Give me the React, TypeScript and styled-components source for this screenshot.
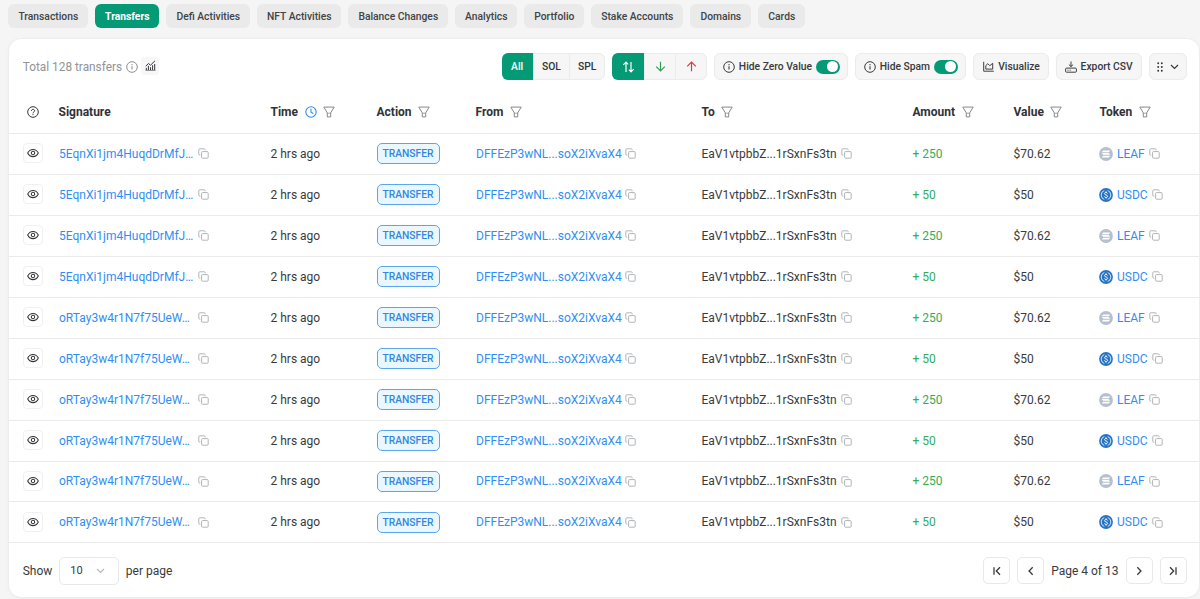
import React from "react";
import styled, { createGlobalStyle, css } from "styled-components";

const Global = createGlobalStyle`
  * { box-sizing: border-box; }
  body {
    margin: 0;
    background: #f5f5f5;
    color: #383a3d;
    font-family: Roboto, "Liberation Sans", sans-serif;
    font-size: 12px;
    overflow: hidden;
  }
  button { font: inherit; color: inherit; padding: 0; margin: 0; }
  svg { display: block; flex: none; }
`;

const Page = styled.div`
  width: 1200px;
  height: 599px;
  padding: 4px 0 1px 8px;
  overflow: hidden;
`;

const Tabs = styled.nav`
  display: flex;
  gap: 7px;
  height: 24px;
  margin-bottom: 10px;
`;

const Tab = styled.button<{ $w: number; $active?: boolean }>`
  width: ${(p) => p.$w}px;
  height: 24px;
  padding-left: 0.6px;
  border: 0;
  border-radius: 6px;
  background: ${(p) => (p.$active ? "#059a76" : "#eaeaea")};
  color: ${(p) => (p.$active ? "#fff" : "#414345")};
  font-size: 10.3px;
  font-weight: ${(p) => (p.$active ? 700 : 500)};
  white-space: nowrap;
`;

const Card = styled.main`
  height: 560px;
  border: 1px solid #eceeee;
  border-radius: 13px;
  background: #fff;
  box-shadow: 0 1px 4px rgba(0, 0, 0, 0.03);
`;

const Toolbar = styled.div`
  display: flex;
  align-items: center;
  height: 55px;
  padding: 0 12.5px 0 13.7px;
`;

const Total = styled.div`
  display: flex;
  align-items: center;
  flex: 1;
  gap: 3.5px;
  color: #919497;
  font-size: 11.85px;
`;

const StatsButton = styled.button`
  display: grid;
  place-items: center;
  width: 18px;
  height: 18px;
  margin-top: -2px;
  border: 0;
  border-radius: 3px;
  background: #f7f7f7;
  color: #333539;
`;

const Controls = styled.div`
  display: flex;
  gap: 7px;
  font-size: 10.3px;
  font-weight: 500;
`;

const surface = css`
  height: 27px;
  border: 1px solid #ebebeb;
  border-radius: 6px;
  background: #f6f6f6;
`;

const Segments = styled.div`
  ${surface}
  display: flex;
`;

const Segment = styled.button<{ $w: number; $active?: boolean; $tone?: string }>`
  display: grid;
  place-items: center;
  width: ${(p) => p.$w}px;
  height: 27px;
  margin-top: -1px;
  border: 0;
  background: ${(p) => (p.$active ? "#059a76" : "transparent")};
  color: ${(p) => (p.$active ? "#fff" : p.$tone || "#333539")};
  & + & { border-left: 1px solid #ebebeb; }
  &:first-child {
    margin-left: -1px;
    border-radius: 6px 0 0 6px;
  }
`;

const Control = styled.button<{ $w: number; $gap?: number }>`
  ${surface}
  display: flex;
  align-items: center;
  justify-content: center;
  gap: ${(p) => p.$gap ?? 3.5}px;
  width: ${(p) => p.$w}px;
  white-space: nowrap;
`;

const Switch = styled.span`
  display: flex;
  justify-content: flex-end;
  width: 24px;
  height: 14px;
  padding: 1.5px;
  border-radius: 7px;
  background: #059a76;
  &::after {
    content: "";
    width: 11px;
    height: 11px;
    border-radius: 50%;
    background: #fff;
  }
`;

const columns = "49.5px 212px 106px 99px 226px 211px 101px 86px 1fr";

const HeaderRow = styled.div`
  display: grid;
  grid-template-columns: ${columns};
  align-items: center;
  height: 39px;
  padding-bottom: 4px;
  color: #303236;
  font-size: 12px;
  font-weight: 700;
`;

const HeaderCell = styled.div`
  display: flex;
  align-items: center;
  gap: 6.5px;
`;

const Row = styled.div`
  display: grid;
  grid-template-columns: ${columns};
  align-items: center;
  height: 40.95px;
  border-top: 1px solid #ebebeb;
`;

const Cell = styled.div<{ $color?: string }>`
  display: flex;
  align-items: center;
  gap: 4px;
  color: ${(p) => p.$color || "inherit"};
  white-space: nowrap;
`;

const LinkCell = styled(Cell)`
  padding-left: 0.5px;
  color: #2f8ef4;
  gap: 3.5px;
`;

const TokenCell = styled(Cell)`
  margin-left: -0.5px;
  color: #2f8ef4;
`;

const Signature = styled.span`
  width: 135px;
`;

const IconCell = styled.div`
  padding-left: 13.5px;
`;

const HelpCell = styled.div`
  padding-left: 17.5px;
`;

const EyeButton = styled.button`
  display: grid;
  place-items: center;
  width: 20px;
  height: 20px;
  margin-top: -1px;
  border: 1px solid #f0f0f0;
  border-radius: 4px;
  background: #fff;
`;

const Tag = styled.span`
  display: grid;
  place-items: center;
  width: 63px;
  height: 21px;
  border: 1px solid #5ba6f0;
  border-radius: 5px;
  background: #eaf7ff;
  color: #3487e0;
  font-size: 10.3px;
  font-weight: 500;
`;

const Footer = styled.div`
  display: flex;
  align-items: center;
  height: 55.5px;
  padding: 0 12.5px 0 13.7px;
  border-top: 1px solid #ebebeb;
`;

const Select = styled.button`
  display: flex;
  align-items: center;
  justify-content: space-between;
  width: 59.5px;
  height: 28px;
  margin: 0 7px;
  padding: 0 13px 0 10px;
  border: 1px solid #e8e8e8;
  border-radius: 5px;
  background: #fff;
  font-size: 11px;
`;

const Pager = styled.div`
  display: flex;
  align-items: center;
  gap: 7px;
  margin-left: auto;
`;

const PageButton = styled.button`
  display: grid;
  place-items: center;
  width: 27px;
  height: 27px;
  border: 1px solid #e8e8e8;
  border-radius: 5px;
  background: #fff;
`;

const Info = ({ color = "currentColor" }: { color?: string }) => (
  <svg width="12" height="12" viewBox="0 0 12 12" fill="none" stroke={color}>
    <circle cx="6" cy="6" r="5.3" strokeWidth="1" />
    <path d="M6 5.3v3.3" strokeWidth="1.1" />
    <circle cx="6" cy="3.7" r="0.65" fill={color} stroke="none" />
  </svg>
);

const Help = () => (
  <svg width="12" height="12" viewBox="0 0 12 12" fill="none" stroke="#333539">
    <circle cx="6" cy="6" r="5.3" strokeWidth="1" />
    <path d="M4.4 4.9c0-2.1 3.2-2.1 3.2-.1C7.6 6 6 5.9 6 7.3" strokeWidth="1" />
    <circle cx="6" cy="8.6" r="0.6" fill="#333539" stroke="none" />
  </svg>
);

const Clock = () => (
  <svg width="12" height="12" viewBox="0 0 12 12" fill="none" stroke="#2f8ef4" strokeWidth="1.1">
    <circle cx="6" cy="6" r="5.2" />
    <path d="M6 2.7v3.6l2.3 1.3" />
  </svg>
);

const Funnel = () => (
  <svg width="12" height="12" viewBox="0 0 12 12" fill="none" stroke="#7f8285" strokeWidth="0.95" strokeLinejoin="round">
    <path d="M.8 1.1h10.4L7.7 6.9v4H4.3v-4z" />
    <path d="M4.3 7.2h3.4" strokeWidth="0.7" />
  </svg>
);

const Copy = () => (
  <svg width="11" height="11" viewBox="0 0 11 11" fill="none" stroke="#b1b4b7" strokeWidth="1" strokeLinejoin="round">
    <rect x="3.6" y="3.6" width="6.6" height="6.6" rx="0.9" />
    <path d="M2.3 7.2H1.7a.9.9 0 0 1-.9-.9V1.7c0-.5.4-.9.9-.9h4.6c.5 0 .9.4.9.9v.6" />
  </svg>
);

const Eye = () => (
  <svg width="12" height="10" viewBox="0 0 12 10" fill="none" stroke="#333539" strokeWidth="1.05">
    <path d="M.7 5C3.1.2 8.9.2 11.3 5 8.9 9.8 3.1 9.8.7 5z" />
    <circle cx="6" cy="5" r="1.7" />
  </svg>
);

const Stats = () => (
  <svg width="11" height="11" viewBox="0 0 11 11" fill="none" stroke="#333539">
    <path d="M.7 6.2l2.8-2.7 2 1.7L10 .8" strokeWidth="1" />
    <path d="M1.3 10V7.8M3.4 10V5.8M5.5 10V7.2M7.6 10V5.2M9.7 10V4" strokeWidth="1" />
    <path d="M.5 10.4h10" strokeWidth="0.6" />
  </svg>
);

const Visualize = () => (
  <svg width="11" height="11" viewBox="0 0 11 11" fill="none" stroke="#333539" strokeWidth="0.95">
    <path d="M.7.8v9.4h10.1" />
    <path d="M2.8 8.1V4.6l2-1.9 2 2 2.9-2.4v5.8z" />
  </svg>
);

const Export = () => (
  <svg width="12" height="12" viewBox="0 0 12 12" fill="none" stroke="#333539" strokeWidth="0.95">
    <path d="M6 .5v5M3.9 3.6L6 5.6l2.1-2" />
    <path d="M1.5 7.1h9c.5 0 .9.4.9.9v2.3c0 .5-.4.9-.9.9h-9a.9.9 0 0 1-.9-.9V8c0-.5.4-.9.9-.9z" />
    <path d="M2.5 9.2h1M4.7 9.2h1" />
  </svg>
);

const Arrows = () => (
  <svg width="13" height="12" viewBox="0 0 13 12" fill="none" stroke="currentColor" strokeWidth="1.2">
    <path d="M4 11V1.2M1.3 3.9L4 1.2l2.2 2.2M9 1v9.8M6.8 8.6L9 10.8l2.7-2.7" />
  </svg>
);

const Arrow = ({ up }: { up?: boolean }) => (
  <svg width="11" height="11" viewBox="0 0 11 11" fill="none" stroke="currentColor" strokeWidth="1.2">
    {up ? <path d="M5.5 10.2V1M1.2 5.3L5.5 1l4.3 4.3" /> : <path d="M5.5.8V10M1.2 5.7L5.5 10l4.3-4.3" />}
  </svg>
);

const Chevron = ({ color = "#333539" }: { color?: string }) => (
  <svg width="9" height="6" viewBox="0 0 9 6" fill="none" stroke={color} strokeWidth="1.15">
    <path d="M1 1l3.5 3.5L8 1" />
  </svg>
);

const Dots = () => (
  <svg width="6" height="10" viewBox="0 0 6 10" fill="#333539">
    {[1.2, 4.8].map((x) => [1.3, 5, 8.7].map((y) => <circle key={`${x}-${y}`} cx={x} cy={y} r="0.95" />))}
  </svg>
);

const pagerPaths = {
  first: "M2 1.2v7.6M8 1.2L4.3 5 8 8.8",
  prev: "M6.7 1.2L3 5l3.7 3.8",
  next: "M3.3 1.2L7 5 3.3 8.8",
  last: "M8 1.2v7.6M2 1.2L5.7 5 2 8.8",
};

const PagerIcon = ({ kind }: { kind: keyof typeof pagerPaths }) => (
  <svg width="10" height="10" viewBox="0 0 10 10" fill="none" stroke="#333539" strokeWidth="1.25">
    <path d={pagerPaths[kind]} />
  </svg>
);

const Leaf = () => (
  <svg width="14" height="14" viewBox="0 0 14 14" fill="none">
    <circle cx="7" cy="7" r="6.9" fill="#b6bfcc" />
    <path d="M4.2 3.5h7l-1.5 1.7h-7zM2.7 6.1h7l1.5 1.7h-7zM4.2 8.7h7l-1.5 1.7h-7z" fill="#fff" />
  </svg>
);

const Usdc = () => (
  <svg width="14" height="14" viewBox="0 0 14 14" fill="none" stroke="#fff" strokeWidth="0.9">
    <circle cx="7" cy="7" r="6.9" fill="#2673c4" stroke="none" />
    <path d="M5.3 2.5a4.8 4.8 0 0 0 0 9M8.7 2.5a4.8 4.8 0 0 1 0 9" strokeWidth="0.8" />
    <path d="M8.6 5.5C8.2 4 5.5 4.2 5.5 5.7c0 1.6 3.1.9 3.1 2.6 0 1.6-2.9 1.6-3.2.1M7 3.3v1.1M7 9.5v1.1" />
  </svg>
);

const tabs: [string, number][] = [
  ["Transactions", 80],
  ["Transfers", 64],
  ["Defi Activities", 84],
  ["NFT Activities", 84],
  ["Balance Changes", 100],
  ["Analytics", 62],
  ["Portfolio", 60],
  ["Stake Accounts", 92],
  ["Domains", 61],
  ["Cards", 47],
];

const rows = Array.from({ length: 10 }, (_, i) => ({
  signature: i < 4 ? "5EqnXi1jm4HuqdDrMfJ…" : "oRTay3w4r1N7f75UeW…",
  leaf: i % 2 === 0,
}));

export default function App() {
  return (
    <Page>
      <Global />
      <Tabs>
        {tabs.map(([label, w]) => (
          <Tab key={label} $w={w} $active={label === "Transfers"}>{label}</Tab>
        ))}
      </Tabs>
      <Card>
        <Toolbar>
          <Total>
            Total 128 transfers
            <Info color="#8b8e91" />
            <StatsButton><Stats /></StatsButton>
          </Total>
          <Controls>
            <Segments>
              <Segment $w={31} $active>All</Segment>
              <Segment $w={36.5}>SOL</Segment>
              <Segment $w={35}>SPL</Segment>
            </Segments>
            <Segments>
              <Segment $w={32} $active><Arrows /></Segment>
              <Segment $w={31.3} $tone="#2f9e51"><Arrow /></Segment>
              <Segment $w={31} $tone="#d83b48"><Arrow up /></Segment>
            </Segments>
            <Control $w={134}><Info />Hide Zero Value<Switch /></Control>
            <Control $w={111}><Info />Hide Spam<Switch /></Control>
            <Control $w={75.7} $gap={4.5}><Visualize />Visualize</Control>
            <Control $w={85.6}><Export />Export CSV</Control>
            <Control $w={37.8} $gap={7}><Dots /><Chevron /></Control>
          </Controls>
        </Toolbar>
        <HeaderRow>
          <HelpCell><Help /></HelpCell>
          <HeaderCell>Signature</HeaderCell>
          <HeaderCell>Time<Clock /><Funnel /></HeaderCell>
          <HeaderCell>Action<Funnel /></HeaderCell>
          <HeaderCell>From<Funnel /></HeaderCell>
          <HeaderCell>To<Funnel /></HeaderCell>
          <HeaderCell>Amount<Funnel /></HeaderCell>
          <HeaderCell>Value<Funnel /></HeaderCell>
          <HeaderCell>Token<Funnel /></HeaderCell>
        </HeaderRow>
        {rows.map((row, i) => (
          <Row key={i}>
            <IconCell><EyeButton><Eye /></EyeButton></IconCell>
            <LinkCell><Signature>{row.signature}</Signature><Copy /></LinkCell>
            <Cell>2 hrs ago</Cell>
            <Cell><Tag>TRANSFER</Tag></Cell>
            <LinkCell>DFFEzP3wNL...soX2iXvaX4<Copy /></LinkCell>
            <Cell>EaV1vtpbbZ...1rSxnFs3tn<Copy /></Cell>
            <Cell $color="#31ad5b">{row.leaf ? "+ 250" : "+ 50"}</Cell>
            <Cell>{row.leaf ? "$70.62" : "$50"}</Cell>
            <TokenCell>{row.leaf ? <Leaf /> : <Usdc />}{row.leaf ? "LEAF" : "USDC"}<Copy /></TokenCell>
          </Row>
        ))}
        <Footer>
          Show
          <Select>10<Chevron color="#b5b7b9" /></Select>
          per page
          <Pager>
            <PageButton><PagerIcon kind="first" /></PageButton>
            <PageButton><PagerIcon kind="prev" /></PageButton>
            Page 4 of 13
            <PageButton><PagerIcon kind="next" /></PageButton>
            <PageButton><PagerIcon kind="last" /></PageButton>
          </Pager>
        </Footer>
      </Card>
    </Page>
  );
}
